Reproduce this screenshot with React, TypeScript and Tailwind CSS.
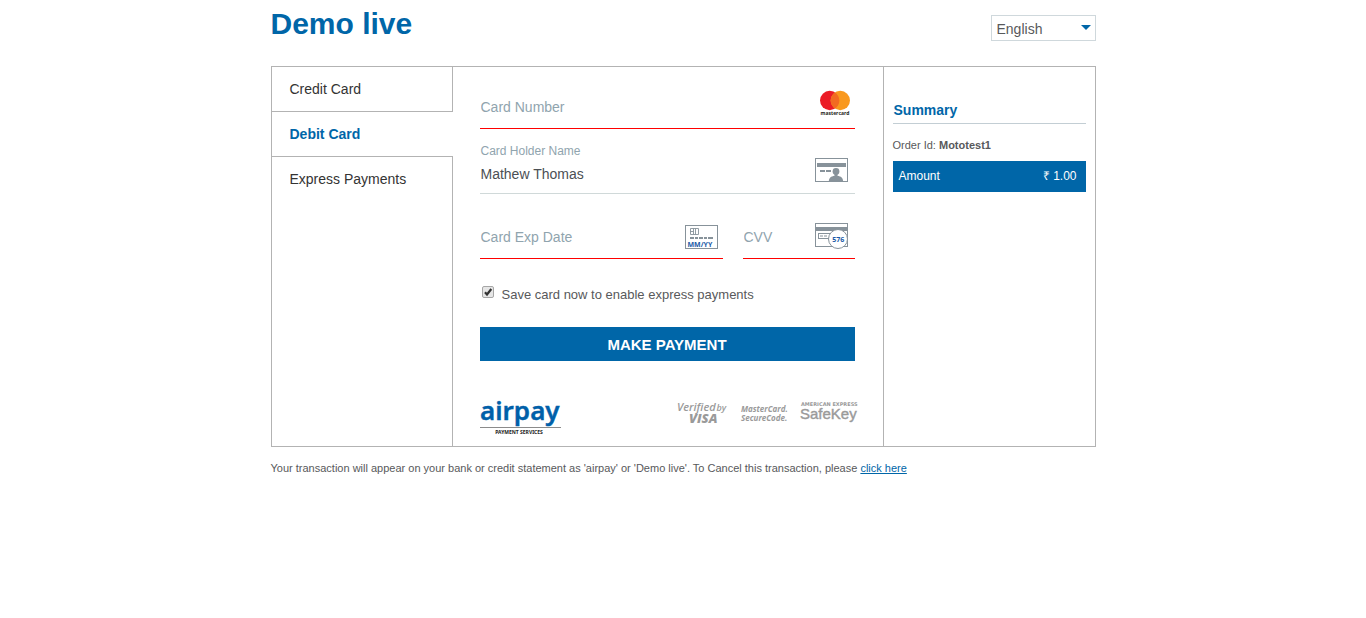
import React, { useState } from "react";

function MastercardLogo() {
  return (
    <svg width="32" height="28" viewBox="0 0 32 28" role="img" aria-label="Mastercard" className="shrink-0">
      <circle cx="10.7" cy="10.5" r="9.7" fill="#eb1c26" />
      <circle cx="21.3" cy="10.5" r="9.7" fill="#f9981d" />
      <path d="M16 2.4a9.7 9.7 0 0 1 0 16.2a9.7 9.7 0 0 1 0-16.2z" fill="#f26a21" />
      <text x="16" y="25" textAnchor="middle" fontSize="5" fontWeight="700" fill="#231f20" fontFamily="'Open Sans', sans-serif">
        mastercard
      </text>
    </svg>
  );
}

function HolderIcon() {
  return (
    <svg width="33" height="25" viewBox="0 0 33 25" aria-hidden="true" className="shrink-0">
      <rect x="0.5" y="0.5" width="32" height="23" fill="#fff" stroke="#87929a" />
      <rect x="2" y="5" width="29" height="4" fill="#87929a" />
      <path d="M5 12h5v2H5zM11 12h5v2h-5z" fill="#87929a" />
      <circle cx="21" cy="13.4" r="3.4" fill="#87929a" />
      <path d="M19.500 15.500h3v2.200c3.600.6 5.600 2 5.700 6.300H13.800c.1-4.300 2.100-5.700 5.700-6.300z" fill="#87929a" />
    </svg>
  );
}

function ExpiryIcon() {
  return (
    <svg width="33" height="25" viewBox="0 0 33 25" aria-hidden="true" className="shrink-0">
      <rect x="0.5" y="0.5" width="32" height="23" fill="#fff" stroke="#87929a" />
      <path d="M5.500 3.500h8v6h-8zM8.500 3.500v6M10.500 3.500v6M5.500 6.500h3" fill="none" stroke="#87929a" strokeWidth="0.9" />
      <path d="M5 12h4v2H5zM10 12h3v2h-3zM14 12h4v2h-4zM19 12h3v2h-3zM23 12h5v2h-5z" fill="#87929a" />
      <text x="2.500" y="21.500" fontSize="7" fontWeight="700" fill="#1a5aa6" fontFamily="'Open Sans', sans-serif">
        MM/YY
      </text>
    </svg>
  );
}

function CvvIcon() {
  return (
    <svg width="34" height="26" viewBox="0 0 34 26" aria-hidden="true" className="shrink-0">
      <rect x="0.5" y="0.5" width="32" height="23" fill="#fff" stroke="#87929a" />
      <rect x="0" y="4" width="33" height="4" fill="#87929a" />
      <rect x="3.500" y="10.500" width="13" height="5" fill="none" stroke="#87929a" />
      <path d="M5 12.500h3v1H5zM9 12.500h3v1H9z" fill="#87929a" />
      <circle cx="23" cy="16" r="9.500" fill="#fff" stroke="#87929a" />
      <text x="23.300" y="18.500" textAnchor="middle" fontSize="7" fontWeight="700" fill="#1a5aa6" fontFamily="'Open Sans', sans-serif">
        576
      </text>
    </svg>
  );
}

function AirpayLogo() {
  return (
    <svg width="84" height="44" viewBox="0 0 84 44" role="img" aria-label="airpay payment services" className="-mt-2 shrink-0">
      <text x="0" y="28" fontSize="26" fontWeight="600" fill="#0060a9" stroke="#0060a9" strokeWidth="0.4" fontFamily="'Noto Sans', 'Open Sans', sans-serif">
        airpay
      </text>
      <rect x="0" y="35" width="81" height="1" fill="#8b8b8b" />
      <text x="39" y="42" textAnchor="middle" fontSize="5" fontWeight="700" fill="#222" fontFamily="'Noto Sans', sans-serif">
        PAYMENT SERVICES
      </text>
    </svg>
  );
}

function BrandMarks() {
  return (
    <svg
      width="184"
      height="32"
      viewBox="0 0 184 32"
      role="img"
      aria-label="Verified by Visa, MasterCard SecureCode, American Express SafeKey"
      className="-mt-1 shrink-0"
    >
      <g fill="#9a9a9a" fontFamily="'Open Sans', sans-serif" fontStyle="italic">
        <text x="2" y="15" fontSize="11" fontWeight="600">
          Verified <tspan dx="-2" fontSize="9">by</tspan>
        </text>
        <text x="14" y="27" fontSize="13" fontWeight="800">VISA</text>
      </g>
      <g fill="#9a9a9a" fontFamily="'Open Sans', sans-serif" fontStyle="italic" fontWeight="700" fontSize="8">
        <text x="66" y="16">MasterCard.</text>
        <text x="66" y="25">SecureCode.</text>
      </g>
      <g fill="#9a9a9a">
        <text x="126" y="10" fontSize="5" fontWeight="700" fontFamily="'DejaVu Sans', sans-serif">AMERICAN EXPRESS</text>
        <text x="125" y="23" fontSize="15" stroke="#9a9a9a" strokeWidth="0.4" fontFamily="'Liberation Sans', sans-serif">SafeKey</text>
      </g>
    </svg>
  );
}

const inputClass =
  "min-w-0 flex-1 bg-transparent pl-px text-sm leading-5 text-[#4b4f54] outline-none placeholder:text-[#90a4ae] placeholder:opacity-100";

const tabs = ["Credit Card", "Debit Card", "Express Payments"];

export default function App() {
  const [active, setActive] = useState(1);
  const [holder, setHolder] = useState("Mathew Thomas");
  const [save, setSave] = useState(true);

  return (
    <div className="mx-auto max-w-[825px] font-['Liberation_Sans',Arial,sans-serif] text-[#58595b]">
      <header className="flex items-start justify-between">
        <h1 className="pt-1 text-[30px] leading-10 font-bold text-[#0066a8]">Demo live</h1>
        <div className="relative mt-[15px] w-[105px]">
          <select
            aria-label="Language"
            className="block h-[26px] w-full appearance-none border border-[#cfd8dc] bg-white px-[5px] pt-px text-sm leading-5 text-[#58595b]"
          >
            <option>English</option>
          </select>
          <svg width="10" height="5" viewBox="0 0 10 5" aria-hidden="true" className="pointer-events-none absolute top-[10px] right-[5px]">
            <path d="M0 0h10L5 5z" fill="#0066a8" />
          </svg>
        </div>
      </header>

      <main className="mt-[22px] flex border border-[#b3b3b3]">
        <nav className="flex w-[181px] shrink-0 flex-col">
          {tabs.map((t, i) => (
            <button
              key={t}
              type="button"
              onClick={() => setActive(i)}
              className={
                "h-[45px] px-[18px] text-left text-sm " +
                (i === tabs.length - 1 ? "pb-px " : "border-b border-b-[#b3b3b3] ") +
                (i === active
                  ? "font-bold text-[#0066a8]"
                  : "border-r border-r-[#b3b3b3] text-[#333]")
              }
            >
              {t}
            </button>
          ))}
          <div className="flex-1 border-r border-[#b3b3b3]" />
        </nav>

        <form className="min-w-0 flex-1 pt-[18px] pr-7 pl-[27px]" onSubmit={(e) => e.preventDefault()}>
          <div className="flex h-11 items-start border-b border-[#ff0000] pt-[5px] pr-1">
            <input aria-label="Card Number" placeholder="Card Number" className={inputClass + " mt-[7px]"} />
            <MastercardLogo />
          </div>

          <div className="flex h-[65px] items-center justify-between border-b border-[#d0d9d9] pr-[7px]">
            <div className="flex min-w-0 flex-1 flex-col pt-[3px] pl-px">
              <label htmlFor="holder" className="text-xs leading-6 text-[#90a4ae]">
                Card Holder Name
              </label>
              <input
                id="holder"
                value={holder}
                onChange={(e) => setHolder(e.target.value)}
                className="w-full bg-transparent text-sm leading-[23px] text-[#4b4f54] outline-none"
              />
            </div>
            <div className="pt-[18px]"><HolderIcon /></div>
          </div>

          <div className="flex gap-5 pt-5">
            <div className="flex h-[45px] min-w-0 flex-1 items-center border-b border-[#ff0000] pt-[2px] pr-[5px]">
              <input aria-label="Card Exp Date" placeholder="Card Exp Date" className={inputClass} />
              <ExpiryIcon />
            </div>
            <div className="flex h-[45px] w-28 items-center border-b border-[#ff0000] pr-[6px]">
              <input aria-label="CVV" placeholder="CVV" className={inputClass + " pt-px"} />
              <CvvIcon />
            </div>
          </div>

          <div className="flex items-center gap-2 pt-[26px] pl-[2px]">
            <span className="relative -mt-[6px] block size-3">
              <input
                id="save"
                type="checkbox"
                checked={save}
                onChange={(e) => setSave(e.target.checked)}
                className="block size-3 appearance-none rounded-[2px] border border-[#a6a6a6] bg-[#e6e6e6]"
              />
              {save && (
                <svg width="12" height="12" viewBox="0 0 12 12" aria-hidden="true" className="pointer-events-none absolute inset-0">
                  <path d="M3 6.200l2 2.300L9.300 3" fill="none" stroke="#333" strokeWidth="2.200" />
                </svg>
              )}
            </span>
            <label htmlFor="save" className="text-[13px] leading-5">
              Save card now to enable express payments
            </label>
          </div>

          <button type="submit" className="mt-[22px] block h-[34px] w-full bg-[#0066a8] pt-[2px] text-[15px] font-bold text-white">
            MAKE PAYMENT
          </button>

          <div className="-mr-1 flex items-start justify-between pt-[39px] pb-[10px]">
            <AirpayLogo />
            <BrandMarks />
          </div>
        </form>

        <aside className="w-[212px] shrink-0 border-l border-[#b3b3b3] px-[9px] pt-[33px]">
          <h2 className="border-b border-[#c3ced4] pb-[3px] pl-px text-sm leading-5 font-bold text-[#0066a8]">Summary</h2>
          <p className="pt-[11px] text-[11px] leading-5">
            Order Id: <b>Mototest1</b>
          </p>
          <div className="mt-[6px] flex h-[31px] items-center justify-between bg-[#0066a8] pr-[9px] pb-px pl-[6px] text-xs text-white">
            <span>Amount</span>
            <span>₹ 1.00</span>
          </div>
        </aside>
      </main>

      <p className="pt-[11px] text-[11px] leading-5">
        Your transaction will appear on your bank or credit statement as 'airpay' or 'Demo live'. To Cancel this transaction, please{" "}
        <a href="#cancel" className="text-[#0066a8] underline">
          click here
        </a>
      </p>
    </div>
  );
}
